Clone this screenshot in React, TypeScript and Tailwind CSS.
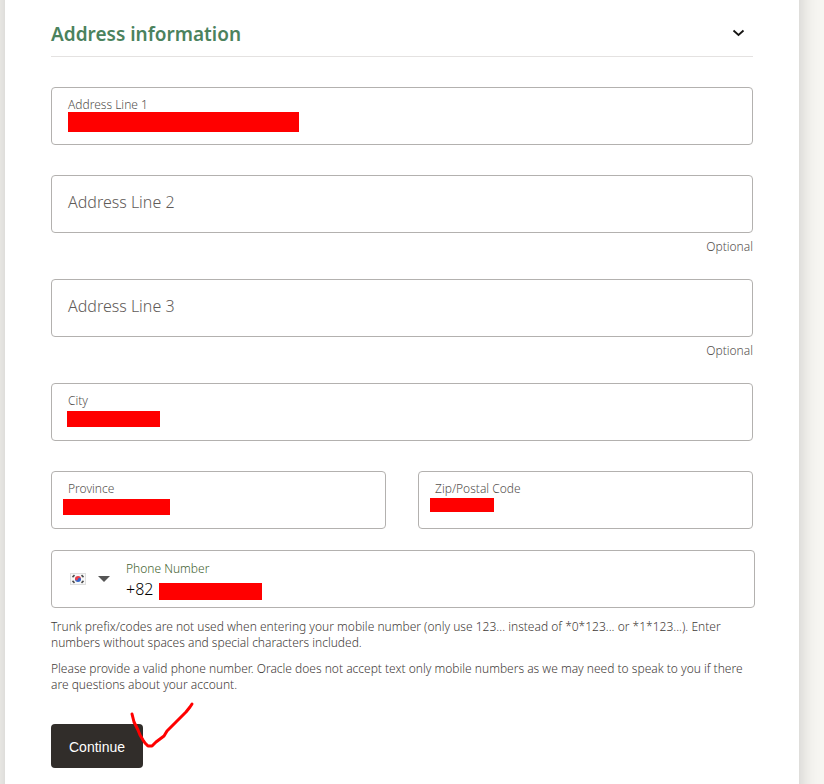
import { useState, type ReactNode } from "react";
import { clsx } from "clsx";

interface FieldProps {
  id: string;
  label: string;
  filled?: boolean;
  optional?: boolean;
  children?: ReactNode;
}

const Field = ({ id, label, filled, optional, children }: FieldProps) => {
  const [value, setValue] = useState("");
  const raised = filled || value !== "";

  return (
    <div className="min-w-0">
      <div className="relative h-[58px] rounded border border-[#b3b1af]">
        <label
          htmlFor={id}
          className={clsx(
            "pointer-events-none absolute left-4 font-light",
            raised ? "top-[9px] text-xs text-[#55514e]" : "top-[14px] text-base text-[#5f5b58]"
          )}
        >
          {label}
        </label>
        <input
          id={id}
          value={value}
          onChange={(e) => setValue(e.target.value)}
          className="h-full w-full rounded bg-transparent px-4 pt-5 text-base outline-none"
        />
        {children}
      </div>
      {optional && (
        <p className="mt-1.5 text-right text-xs font-light text-[#55514e]">Optional</p>
      )}
    </div>
  );
};

const KoreaFlag = () => (
  <svg width="16" height="12" viewBox="0 0 16 12" aria-hidden="true">
    <rect x="0.5" y="0.5" width="15" height="11" fill="#f8f8f8" stroke="#dedede" />
    <path d="M5 6a3 3 0 0 1 6 0z" fill="#e8404a" />
    <path d="M5 6a3 3 0 0 0 6 0z" fill="#3267c8" />
    <circle cx="6.5" cy="6" r="1.4" fill="#e8404a" />
    <circle cx="9.5" cy="6.2" r="1.4" fill="#3267c8" />
    <g stroke="#4a4a4a" strokeWidth="1.5">
      <path d="M2.5 4.1l2-2M11.5 2.1l2 2M2.5 7.9l2 2M11.5 9.9l2-2" />
    </g>
  </svg>
);

const PhoneField = () => {
  const [phone, setPhone] = useState("+82");

  return (
    <div className="relative -mr-0.5 flex h-[58px] rounded border border-[#b3b1af]">
      <button
        type="button"
        aria-label="Country code"
        className="flex w-[74px] shrink-0 items-center gap-3 pl-[18px]"
      >
        <KoreaFlag />
        <svg width="12" height="6" viewBox="0 0 12 6" aria-hidden="true">
          <path d="M0 0h12L6 6z" fill="#555" />
        </svg>
      </button>
      <div className="flex min-w-0 flex-1 flex-col pt-[10px]">
        <label htmlFor="phone" className="text-xs font-light text-[#3f5f30]">
          Phone Number
        </label>
        <input
          id="phone"
          type="tel"
          value={phone}
          onChange={(e) => setPhone(e.target.value)}
          className="h-6 w-full bg-transparent text-base font-light text-black outline-none"
        />
      </div>
      <span className="absolute left-[107px] top-8 h-[17px] w-[103px] bg-[#ff0000]" />
    </div>
  );
};

export default function App() {
  const [open, setOpen] = useState(true);

  return (
    <div className="flex min-h-screen flex-col overflow-hidden bg-[#f7f6f2] pl-[5px] pr-[25px] font-['Noto_Sans',sans-serif]">
      {/* runs past the top and bottom edge so the side shadow stays even */}
      <main className="-my-6 grow bg-white px-[46px] py-10 shadow-[0_0_20px_rgba(0,0,0,0.2)]">
        <header className="flex h-[41px] items-start justify-between border-b border-[#e4e2e1]">
          <h2 className="text-[19px]/9 font-semibold text-[#4b825d]">
            Address information
          </h2>
          <button
            type="button"
            aria-label="Toggle address information"
            aria-expanded={open}
            onClick={() => setOpen(!open)}
            className="mr-2 mt-[11px]"
          >
            <svg width="13" height="12" viewBox="0 0 13 12" fill="none" aria-hidden="true">
              <path d="M1.5 3.5l5 4.5 5-4.5" stroke="#161513" strokeWidth="1.8" />
            </svg>
          </button>
        </header>

        {open && (
          <form className="mt-[30px]" onSubmit={(e) => e.preventDefault()}>
            <div className="flex flex-col">
              <Field id="address1" label="Address Line 1" filled>
                <span className="absolute left-4 top-6 h-5 w-[231px] bg-[#ff0000]" />
              </Field>
              <div className="mt-[30px] flex flex-col gap-6">
                <Field id="address2" label="Address Line 2" optional />
                <Field id="address3" label="Address Line 3" optional />
                <Field id="city" label="City" filled>
                  <span className="absolute left-[15px] top-[27px] h-4 w-[93px] bg-[#ff0000]" />
                </Field>
              </div>
              <div className="mt-[30px] grid grid-cols-2 gap-8">
                <Field id="province" label="Province" filled>
                  <span className="absolute left-[11px] top-[27px] h-4 w-[107px] bg-[#ff0000]" />
                </Field>
                <Field id="zip" label="Zip/Postal Code" filled>
                  <span className="absolute left-[11px] top-[26px] h-[14px] w-16 bg-[#ff0000]" />
                </Field>
              </div>
            </div>

            <div className="mt-[21px]">
              <PhoneField />
              <div className="mt-[11px] flex flex-col gap-[10px] text-xs font-light text-[#3f3b38]">
                <p>
                  Trunk prefix/codes are not used when entering your mobile number
                  (only use 123... instead of *0*123... or *1*123...). Enter
                  numbers without spaces and special characters included.
                </p>
                <p>
                  Please provide a valid phone number. Oracle does not accept text
                  only mobile numbers as we may need to speak to you if there are
                  questions about your account.
                </p>
              </div>
            </div>

            <div className="relative mt-[31px] w-fit">
              <button
                type="submit"
                className="h-11 rounded bg-[#312d2a] px-[18px] pt-0.5 font-['Liberation_Sans',sans-serif] text-sm text-white"
              >
                Continue
              </button>
              <svg
                className="pointer-events-none absolute -right-[52px] -top-6"
                width="66"
                height="50"
                viewBox="0 0 66 50"
                fill="none"
                aria-hidden="true"
              >
                <path
                  d="M3 14l2 8 4 8 2 5 3 5 2 3 3 3h4l4-4 8-6 3-5 9-9 5-5 5-5 4-5 2-3"
                  stroke="#ff0000"
                  strokeWidth="3"
                  strokeLinecap="round"
                  strokeLinejoin="round"
                />
              </svg>
            </div>
          </form>
        )}
      </main>
    </div>
  );
}
